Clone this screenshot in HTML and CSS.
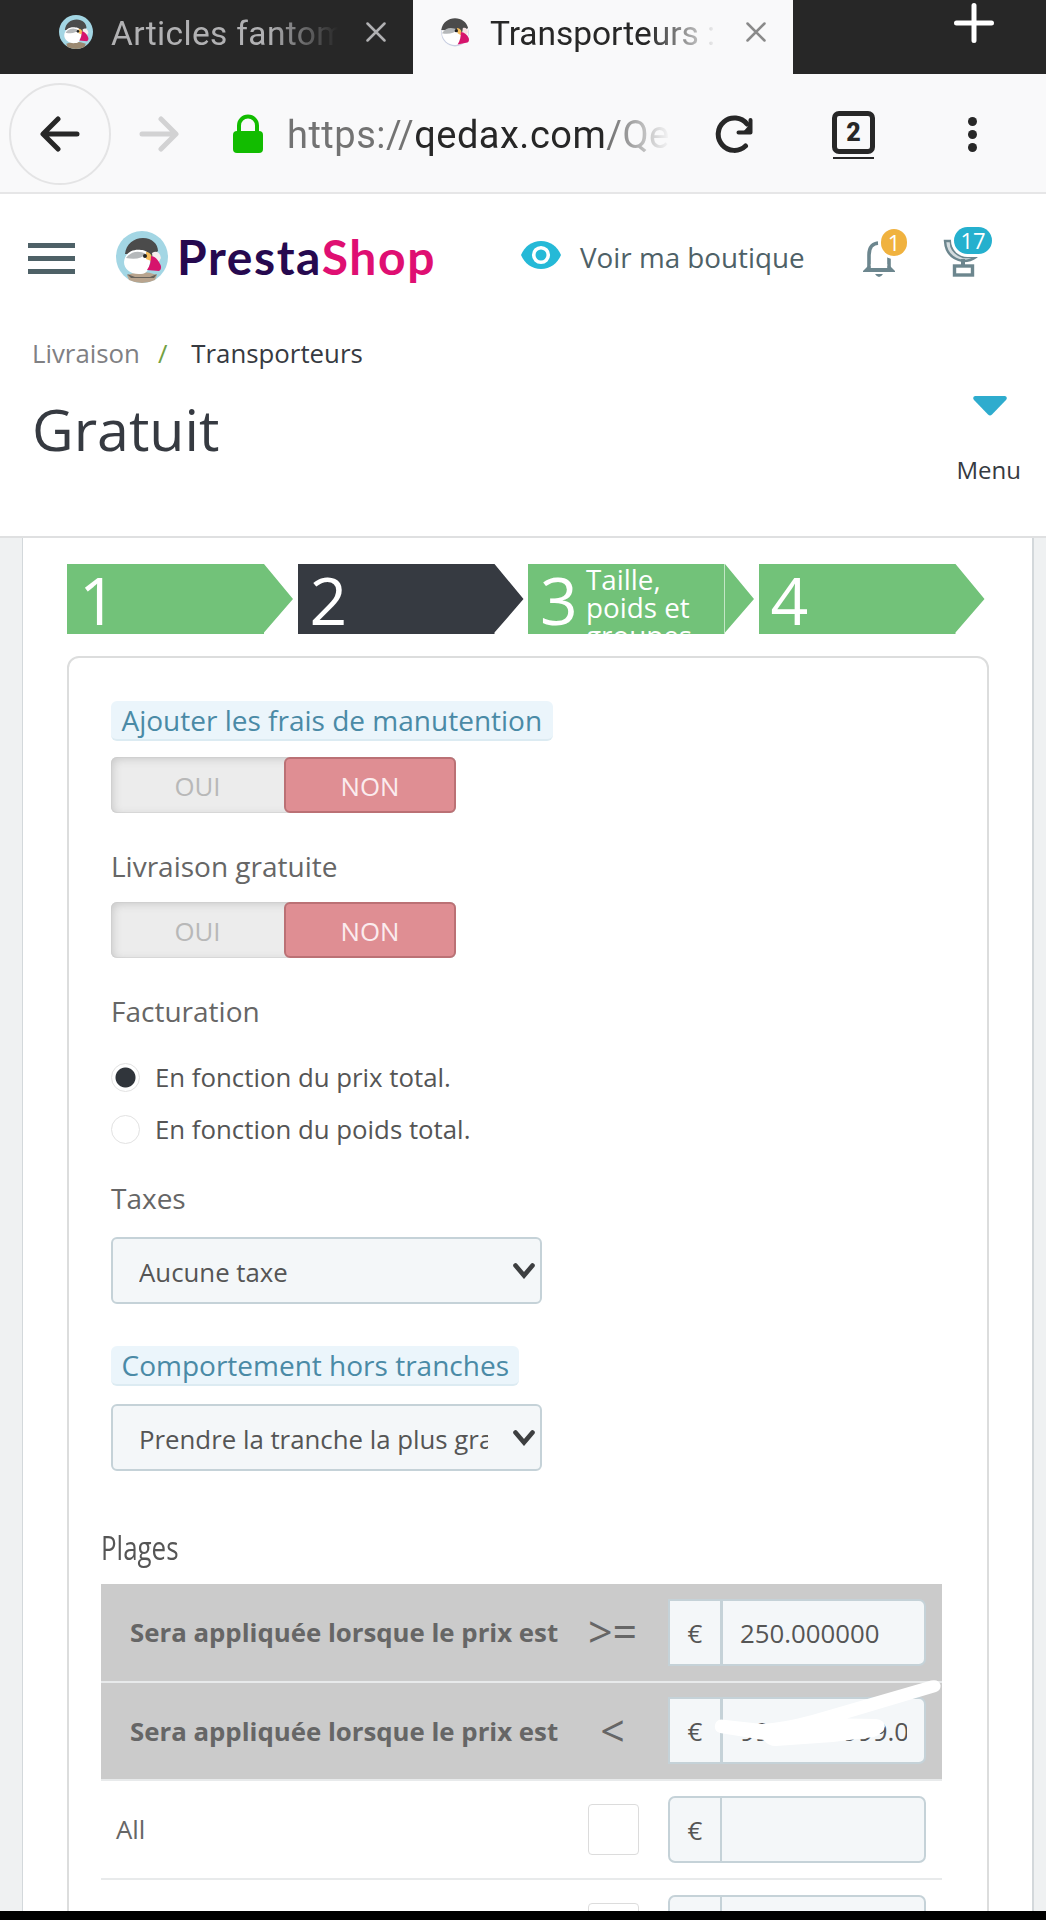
FILE: index.html
```html
<!DOCTYPE html>
<html lang="fr">
<head>
    <meta charset="UTF-8">
    <title>Transporteurs</title>
    <link rel="stylesheet" href="styles.css">
</head>
<body>
    <svg class="defs" width="0" height="0">
        <defs>
            <symbol id="puffin" viewBox="0 0 52 52">
                <path d="M9 23C10 13 18 7 27 7c9 0 15 6 15 13l-7 6-10-3z" fill="#4b4b4b"/>
                <path d="M8 31c1-9 8-13 17-12 6 0 9 4 9 10 0 8-3 14-9 14C15 44 8 38 8 31z" fill="#fff"/>
                <path d="M10 27c5-7 13-8 20-4-4 4-10 6-20 4z" fill="#b5b8ba"/>
                <path d="M36 22c5-3 8 0 9 5l-4 7-4-6z" fill="#f5eeee"/>
                <path d="M30 21c5 0 7 5 5 9l-5-2z" fill="#f6bd5b"/>
                <path d="M35 25c4 0 7 4 9 8 2 3 1 6-1 7l-12-1c3-4 4-9 4-14z" fill="#d6146c"/>
                <circle cx="29" cy="25" r="2" fill="#222"/>
            </symbol>
        </defs>
    </svg>

    <div class="tabs">
        <div class="tab">
            <svg class="favicon" viewBox="0 0 52 52">
                <circle cx="26" cy="26" r="26" fill="#a3d6e4"/>
                <path d="M11 44q15-6 30 0l-2 5q-13 6-26 0z" fill="#9b8972"/>
                <use href="#puffin"/>
            </svg>
            <span class="tab-title">Articles fantom</span>
            <svg class="tab-close" viewBox="0 0 20 20"><path d="M1.500 1.500l17 17M18.500 1.500l-17 17"/></svg>
        </div>
        <div class="tab active">
            <svg class="favicon" viewBox="0 0 52 52">
                <circle cx="26" cy="27" r="21" fill="#c9d0e2"/>
                <circle cx="26" cy="26" r="20" fill="#fff"/>
                <path d="M5 23C7 11 16 5 26 5s18 6 20 15l-12 8-10-4z" fill="#4b4b4b"/>
                <path d="M6 28c6-9 15-10 24-5-5 5-14 7-24 5z" fill="#b5b8ba"/>
                <path d="M38 20c4-2 7 1 8 6l-4 7-5-6z" fill="#f5e3e3"/>
                <path d="M29 20c6 0 8 6 6 11l-5-3z" fill="#f6bd5b"/>
                <path d="M35 26c5 0 9 4 12 9 1 4 0 6-2 7l-15 3c4-6 5-12 5-19z" fill="#d6146c"/>
                <circle cx="28" cy="24" r="2.500" fill="#222"/>
            </svg>
            <span class="tab-title">Transporteurs :</span>
            <svg class="tab-close" viewBox="0 0 20 20"><path d="M1.500 1.500l17 17M18.500 1.500l-17 17"/></svg>
        </div>
        <div class="new-tab">
            <svg width="40" height="40" viewBox="0 0 40 40"><path d="M20 2.500v35M2.500 20h35"/></svg>
        </div>
    </div>

    <div class="navbar">
        <div class="back">
            <svg width="40" height="36" viewBox="0 0 40 36"><path d="M37 18H4M18 3L3 18l15 15"/></svg>
        </div>
        <svg class="forward" width="40" height="36" viewBox="0 0 40 36"><path d="M3 18h33M22 3l15 15-15 15"/></svg>
        <svg class="lock" width="32" height="40" viewBox="0 0 32 40">
            <path d="M7 20v-8.500a9 9 0 0 1 18 0V20" fill="none" stroke="#12bc00" stroke-width="4"/>
            <rect x="1" y="17" width="30" height="22" rx="4" fill="#12bc00"/>
        </svg>
        <span class="url">https://<b>qedax.com</b>/Qe</span>
        <svg class="reload" width="40" height="38" viewBox="0 0 40 38">
            <path d="M31.500 31A16.200 16.200 0 1 1 33 9"/>
            <path d="M24.500 17.500h12V5" stroke-width="4"/>
            <path d="M29 17h7V9z" fill="#272727" stroke="none"/>
        </svg>
        <div class="tab-count"><span>2</span></div>
        <div class="dots"><i></i><i></i><i></i></div>
    </div>

    <header>
        <div class="topbar">
            <div class="burger"><i></i><i></i><i></i></div>
            <svg class="logo" viewBox="0 0 52 52">
                <circle cx="26" cy="26" r="26" fill="#a3d6e4"/>
                <path d="M11 44q15-6 30 0l-2 5q-13 6-26 0z" fill="#b8a48e"/>
                <path d="M11 43l8 3 15 0 7-3-3 4H15z" fill="#67625b"/>
                <use href="#puffin"/>
            </svg>
            <span class="brand">Presta<em>Shop</em></span>
            <svg class="eye" width="40" height="28" viewBox="0 0 40 28">
                <path d="M20 0C11 0 3.500 5.500 0 14c3.500 8.500 11 14 20 14s16.500-5.500 20-14C36.500 5.500 29 0 20 0z" fill="#25b9d7"/>
                <circle cx="20" cy="14" r="7.300" fill="#25b9d7" stroke="#fff" stroke-width="3.600"/>
            </svg>
            <span class="view-shop">Voir ma boutique</span>
            <div class="notif">
                <svg width="32" height="40" viewBox="0 0 32 40">
                    <path d="M6 33V18C6 10 10 6 16 6s10 4 10 12v15" fill="none" stroke="#6c868e" stroke-width="3.600"/>
                    <path d="M0 34l5-5h22l5 5v1H0z" fill="#6c868e"/>
                    <path d="M7.800 27h16.400v4H7.800z" fill="#fff"/>
                    <path d="M12 37h8q-4 6-8 0z" fill="#6c868e"/>
                </svg>
                <span class="badge orange">1</span>
            </div>
            <div class="trophy">
                <svg width="38" height="40" viewBox="0 0 38 40">
                    <path d="M2 4h6q-1 11 12 16h13q-5 4-13 4Q3 21 2 4z" fill="#d4dcdf" stroke="#6c868e" stroke-width="2.400"/>
                    <path d="M20 22v6" stroke="#6c868e" stroke-width="4"/>
                    <rect x="11.500" y="29" width="18" height="9" fill="none" stroke="#6c868e" stroke-width="3.400"/>
                </svg>
                <span class="badge blue">17</span>
            </div>
        </div>
        <div class="page-head">
            <div>
                <div class="breadcrumb">Livraison <i>/</i> <span>Transporteurs</span></div>
                <h1>Gratuit</h1>
            </div>
            <div class="menu">
                <svg width="34" height="20" viewBox="0 0 34 20"><path d="M2 0h30q3 1 1 4L19 18.500q-2 2-4 0L1 4Q-1 1 2 0z" fill="#2eacce"/></svg>
                <span>Menu</span>
            </div>
        </div>
    </header>

    <main>
        <div class="panel">
            <ul class="steps">
                <li><span class="num">1</span></li>
                <li class="current"><span class="num">2</span></li>
                <li class="named"><span class="num">3</span><span class="desc">Taille, poids et groupes</span></li>
                <li><span class="num">4</span></li>
            </ul>

            <form class="box">
                <label class="tip">Ajouter les frais de manutention</label>
                <div class="switch"><span>OUI</span><span class="on">NON</span></div>

                <label>Livraison gratuite</label>
                <div class="switch"><span>OUI</span><span class="on">NON</span></div>

                <label class="billing">Facturation</label>
                <div class="radio checked"><i></i>En fonction du prix total.</div>
                <div class="radio"><i></i>En fonction du poids total.</div>

                <label class="taxes">Taxes</label>
                <div class="select">
                    <span>Aucune taxe</span>
                    <svg width="22" height="16" viewBox="0 0 22 16"><path d="M2.500 2.500L11 12.500l8.500-10"/></svg>
                </div>

                <label class="tip second">Comportement hors tranches</label>
                <div class="select">
                    <span>Prendre la tranche la plus grande</span>
                    <svg width="22" height="16" viewBox="0 0 22 16"><path d="M2.500 2.500L11 12.500l8.500-10"/></svg>
                </div>

                <h2><span>Plages</span></h2>
                <div class="ranges">
                    <div class="row head">
                        <span class="name">Sera appliquée lorsque le prix est</span>
                        <span class="op">&gt;=</span>
                        <div class="amount"><span>€</span><div><p>250.000000</p></div></div>
                    </div>
                    <div class="row head">
                        <span class="name">Sera appliquée lorsque le prix est</span>
                        <span class="op">&lt;</span>
                        <div class="amount"><span>€</span><div><p>9999999999.0</p></div></div>
                        <!-- white marker strokes over the value -->
                        <svg class="scribble" width="230" height="72" viewBox="714 1678 230 72">
                            <path d="M721 1719.500L762 1724Q782 1723 812 1715L931 1680.500Q939 1679 940.500 1685 941 1690 936 1692L847 1718.500 876 1719Q884 1720 885 1726 884 1733 874 1737L833 1742 776 1746Q768 1746 764 1740L720 1733Q714 1731 715 1725 716 1720 721 1719.500z" fill="#fff"/>
                        </svg>
                    </div>
                    <div class="row">
                        <span class="name">All</span>
                        <span class="op"><i class="check"></i></span>
                        <div class="amount"><span>€</span><div></div></div>
                    </div>
                    <div class="row">
                        <span class="name"></span>
                        <span class="op"><i class="check"></i></span>
                        <div class="amount"><span></span><div></div></div>
                    </div>
                </div>
            </form>
        </div>
    </main>
    <footer></footer>
</body>
</html>
```
FILE: styles.css
```css
* {
    box-sizing: border-box;
}

body {
    margin: 0;
    height: 1920px;
    overflow: hidden;
    display: flex;
    flex-direction: column;
    font-family: "Open Sans", "Noto Sans", sans-serif;
    font-size: 25.8px;
    color: #555;
    background: #fff;
}

svg, i {
    display: block;
    flex: none;
}

.defs {
    position: absolute;
}

/* browser chrome */
.tabs {
    display: flex;
    flex: none;
    height: 74px;
    background: #272727;
    font-family: Roboto, sans-serif;
    font-size: 33.5px;
}

.tab {
    display: flex;
    align-items: center;
    width: 413px;
    padding: 0 27px 10px 59px;
    color: #b1b1b3;
}

.tab.active {
    width: 380px;
    padding-left: 25px;
    background: #f9f9fa;
    color: #272727;
}

.favicon {
    width: 34px;
    height: 34px;
}

.tab-title {
    flex: 1;
    margin: 2px 23px 0 18px;
    overflow: hidden;
    white-space: nowrap;
    letter-spacing: 0.35px;
    -webkit-mask-image: linear-gradient(to right, #000 68%, transparent 98%);
    mask-image: linear-gradient(to right, #000 68%, transparent 98%);
}

.active .tab-title {
    letter-spacing: -0.05px;
}

.tab-close {
    width: 20px;
    height: 20px;
    fill: none;
    stroke: #b1b1b3;
    stroke-width: 2.5;
    stroke-linecap: round;
}

.active .tab-close {
    stroke: #8a8a8a;
}

.new-tab {
    margin: 3px 0 0 161px;
    stroke: #fff;
    stroke-width: 5;
    stroke-linecap: round;
}

.navbar {
    display: flex;
    align-items: center;
    flex: none;
    height: 120px;
    padding: 2px 0 0 9px;
    background: #f9f9fa;
    border-bottom: 2px solid #e6e6e7;
    fill: none;
    stroke: #272727;
    stroke-width: 5;
    stroke-linecap: round;
    stroke-linejoin: round;
}

.back {
    display: flex;
    align-items: center;
    justify-content: center;
    width: 102px;
    height: 102px;
    border: 2px solid #e4e4e5;
    border-radius: 50%;
}

.forward {
    margin-left: 28px;
    stroke: #d2d2d3;
}

.lock {
    margin-left: 53px;
    stroke: none;
}

.url {
    width: 384px;
    margin: 2px 0 0 23px;
    overflow: hidden;
    white-space: nowrap;
    font-family: Roboto, sans-serif;
    font-size: 38px;
    letter-spacing: 0.5px;
    color: #737373;
    -webkit-mask-image: linear-gradient(to right, #000 84%, transparent 100%);
    mask-image: linear-gradient(to right, #000 84%, transparent 100%);
}

.url b {
    font-weight: 400;
    color: #272727;
}

.reload {
    margin-left: 43px;
}

.tab-count {
    width: 41px;
    margin: 2px 0 0 79px;
    border-bottom: 2px solid #272727;
}

.tab-count span {
    display: block;
    height: 43px;
    margin: 0 -1px 3px;
    border: 5px solid #272727;
    border-radius: 7px;
    font: 900 25px/34px Roboto, sans-serif;
    text-align: center;
    color: #272727;
}

.dots {
    display: flex;
    flex-direction: column;
    gap: 4px;
    margin-left: 94px;
}

.dots i {
    width: 9px;
    height: 9px;
    border-radius: 50%;
    background: #272727;
}

/* back office header */
header {
    flex: none;
    height: 344px;
    border-bottom: 2px solid #dfe0e1;
}

.topbar {
    display: flex;
    align-items: center;
    height: 126px;
    padding-left: 28px;
}

.burger {
    display: flex;
    flex-direction: column;
    gap: 8px;
    margin-top: 3px;
}

.burger i {
    width: 47px;
    height: 5px;
    background: #4e6167;
}

.logo {
    width: 52px;
    height: 52px;
    margin-left: 41px;
}

.brand {
    width: 270px;
    margin-left: 9px;
    font: 700 48px/60px Lato, sans-serif;
    letter-spacing: 1.6px;
    color: #26094f;
}

.brand em {
    font-style: normal;
    color: #df0f72;
}

.eye {
    margin: -4px 0 0 74px;
}

.view-shop {
    width: 240px;
    margin-left: 19px;
    font-size: 27.8px;
    white-space: nowrap;
    color: #4e6167;
}

.notif {
    position: relative;
    margin-left: 43px;
}

.trophy {
    position: relative;
    margin-left: 48px;
}

.badge {
    position: absolute;
    height: 27px;
    border-radius: 14px;
    box-shadow: 0 0 0 3px #fff;
    font-size: 22px;
    line-height: 27px;
    text-align: center;
    color: #fff;
}

.orange {
    top: -8px;
    left: 18px;
    width: 26px;
    background: #f0b23f;
}

.blue {
    top: -10px;
    left: 11px;
    width: 38px;
    background: #25b0ce;
}

.page-head {
    display: flex;
    justify-content: space-between;
    padding: 0 25px 0 32px;
}

.breadcrumb {
    display: flex;
    height: 65px;
    line-height: 67px;
    color: #808083;
}

.breadcrumb i {
    margin: 0 24px 0 18px;
    font-style: normal;
    color: #72a143;
}

.breadcrumb span {
    color: #363a41;
}

h1 {
    margin: 0;
    font-size: 57.3px;
    font-weight: 400;
    line-height: 88px;
    color: #363a41;
}

.menu {
    display: flex;
    flex-direction: column;
    align-items: center;
    padding-top: 76px;
    font-size: 24px;
    line-height: 30px;
    color: #363a41;
}

.menu svg {
    margin: 0 0 39px 2px;
}

/* page body */
main {
    flex: 1;
    min-height: 0;
    overflow: hidden;
    background: #eff1f2;
}

.panel {
    margin: 0 12px 0 22px;
    padding: 26px 43px 0;
    height: 1500px;
    background: #fff;
    border: solid #d3d8db;
    border-width: 0 2px 0 1px;
}

.steps {
    display: flex;
    gap: 4.5px;
    margin: 0 0 22px;
    padding: 0 0 0 1px;
    list-style: none;
}

.steps li {
    display: flex;
    flex: none;
    width: 226px;
    height: 70px;
    padding-left: 12px;
    background: #72c279;
    clip-path: polygon(0 0, 197px 0, 100% 50%, 197px 98%, 197px 100%, 0 100%);
    color: #fff;
}

.steps .current {
    background: #363a41;
}

.steps .named {
    background: linear-gradient(to right, #72c279 196px, #c3e6c6 196px, #c3e6c6 197px, #72c279 197px);
}

.num {
    width: 46px;
    font-size: 66px;
    line-height: 71px;
}

.desc {
    width: 112px;
    padding-top: 1px;
    font-size: 27.8px;
    line-height: 28px;
}

.box {
    width: 922px;
    height: 1400px;
    margin-left: 1px;
    padding: 43px 45px 0 42px;
    border: 2px solid #dcdddd;
    border-radius: 12px;
}

label {
    display: block;
    height: 40px;
    margin-bottom: 16px;
    font-size: 28px;
    line-height: 40px;
    color: #666;
}

label.tip {
    width: max-content;
    padding: 0 10.5px;
    background: #ebf5fb;
    border-bottom: 2px solid #dcebf2;
    border-radius: 6px;
    color: #4a8aa6;
    line-height: 38px;
}

.switch {
    display: flex;
    width: 345px;
    height: 56px;
    margin-bottom: 33px;
    background: #ececec;
    border-radius: 6px;
    box-shadow: inset 2px 2px 8px #c8c8c8, inset 0 0 0 1px #dcdcdc;
}

.switch span {
    width: 173px;
    text-align: center;
    line-height: 59px;
    color: #b8b8b8;
}

.switch .on {
    width: 172px;
    background: #df8e93;
    border: 2px solid #bb7175;
    border-radius: 6px;
    line-height: 55px;
    color: #fbecee;
}

label.billing {
    margin-bottom: 20px;
}

.radio {
    display: flex;
    align-items: center;
    height: 52px;
}

.radio i {
    width: 29px;
    height: 29px;
    margin-right: 15px;
    border: 1px solid #e2e2e2;
    border-radius: 50%;
}

.checked i {
    background: radial-gradient(circle, #30353b 9.5px, #fff 10.5px);
}

label.taxes {
    margin: 23px 0 19px;
}

.select {
    display: flex;
    align-items: center;
    width: 431px;
    height: 67px;
    padding: 0 5px 0 26px;
    background: #f4f7f9;
    border: 2px solid #c5d2d8;
    border-radius: 6px;
}

.select span {
    width: 349px;
    padding-top: 2px;
    margin-right: auto;
    overflow: hidden;
    white-space: nowrap;
}

.select svg {
    fill: none;
    stroke: #3d3f41;
    stroke-width: 4.6;
    stroke-linecap: round;
}

label.second {
    margin: 42px 0 18px;
}

h2 {
    height: 50px;
    margin: 63px 0 0 -10px;
    font-size: 32px;
    font-weight: 400;
    line-height: 28px;
}

h2 span {
    display: inline-block;
    transform: scaleX(0.81);
    transform-origin: left;
}

.ranges {
    width: 841px;
    margin-left: -10px;
}

.row {
    position: relative;
    display: flex;
    align-items: center;
    height: 98.6px;
    padding-left: 15px;
    border-bottom: 2px solid #e8eaeb;
}

.row .name {
    width: 441px;
    white-space: nowrap;
    color: #666;
}

.head {
    padding-left: 29px;
    background: #cbcbcb;
}

.head .name {
    width: 427px;
    font-weight: 700;
}

.op {
    display: flex;
    justify-content: center;
    width: 111px;
    font-size: 43px;
    line-height: 60px;
    color: #666;
}

.check {
    width: 51px;
    height: 51px;
    margin-left: 2px;
    border: 1px solid #dcdcdc;
    border-radius: 4px;
}

.amount {
    display: flex;
    width: 258px;
    height: 67px;
    background: #f4f7f9;
    border: 2px solid #c5d2d8;
    border-radius: 7px;
    line-height: 64px;
}

.amount span {
    width: 50px;
    text-align: center;
}

.amount div {
    flex: 1;
    padding-left: 18px;
    border-left: 2px solid #c5d2d8;
}

.amount p {
    width: 167px;
    margin: 0;
    overflow: hidden;
}

.head .amount {
    border-radius: 0 7px 7px 0;
}

.head .amount div {
    padding-left: 17px;
    border-left-width: 3px;
}

.scribble {
    position: absolute;
    left: 613px;
    top: -5px;
}

footer {
    flex: none;
    height: 9px;
    background: #000;
}
```
